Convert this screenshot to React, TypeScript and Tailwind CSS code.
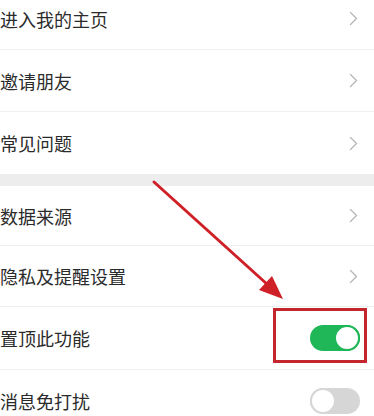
import React from "react";

const font = { fontFamily: '"Noto Sans CJK SC", "Noto Sans", sans-serif' };

function Chevron() {
  return (
    <svg width="9" height="15" viewBox="0 0 9 15" className="mr-[16px]">
      <path d="M1.5 1.5 L7.5 7.5 L1.5 13.5" fill="none" stroke="#b5b5b5" strokeWidth="1.3" strokeLinecap="round" strokeLinejoin="round" />
    </svg>
  );
}

function Row({ label, right, last, h }: { label: string; right: React.ReactNode; last?: boolean; h: string }) {
  return (
    <div className={`flex ${h} items-center justify-between bg-white ${last ? "" : "border-b border-[#efefef]"}`}>
      <span className="pl-0 text-[18px] leading-none text-[#2b2b2b]">{label}</span>
      {right}
    </div>
  );
}

function Toggle({ on }: { on: boolean }) {
  return (
    <div className={`mr-[14px] flex h-[26px] w-[50px] items-center rounded-full ${on ? "justify-end bg-[#1fb758]" : "justify-start bg-[#d6d6d6]"}`}>
      <div className={`h-[26px] w-[26px] rounded-full bg-white ${on ? "border-[2px] border-[#1fb758]" : "border-[2px] border-[#d6d6d6]"}`} />
    </div>
  );
}

export default function App() {
  return (
    <div className="relative h-[416px] w-[374px] overflow-hidden bg-white" style={font}>
      <div className="mt-[-12px]">
        <Row h="h-[62px]" label="进入我的主页" right={<Chevron />} />
        <Row h="h-[62px]" label="邀请朋友" right={<Chevron />} />
        <Row h="h-[62px]" label="常见问题" right={<Chevron />} last />
      </div>
      <div className="h-[12px] bg-[#ededed]" />
      <div>
        <Row h="h-[60px]" label="数据来源" right={<Chevron />} />
        <Row h="h-[61px]" label="隐私及提醒设置" right={<Chevron />} />
        <Row h="h-[63px]" label="置顶此功能" right={<Toggle on />} />
        <Row h="h-[62px]" label="消息免打扰" right={<Toggle on={false} />} last />
      </div>

      <div className="absolute left-[273px] top-[308px] h-[55px] w-[94px] border-[3px] border-[#c4262e]" />

      <svg className="absolute left-0 top-0" width="374" height="416" viewBox="0 0 374 416">
        <line x1="154" y1="182" x2="268" y2="285" stroke="#cf2027" strokeWidth="3" strokeLinecap="round" />
        <polygon points="283,299 259,290 272,276" fill="#cf2027" />
      </svg>
    </div>
  );
}
